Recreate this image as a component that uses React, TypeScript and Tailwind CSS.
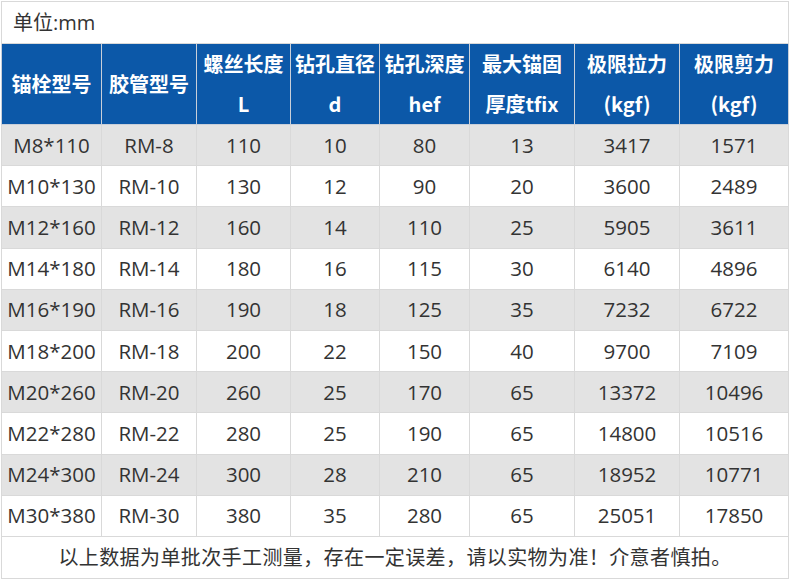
import React from "react";

const rows: string[][] = [
  ["M8*110", "RM-8", "110", "10", "80", "13", "3417", "1571"],
  ["M10*130", "RM-10", "130", "12", "90", "20", "3600", "2489"],
  ["M12*160", "RM-12", "160", "14", "110", "25", "5905", "3611"],
  ["M14*180", "RM-14", "180", "16", "115", "30", "6140", "4896"],
  ["M16*190", "RM-16", "190", "18", "125", "35", "7232", "6722"],
  ["M18*200", "RM-18", "200", "22", "150", "40", "9700", "7109"],
  ["M20*260", "RM-20", "260", "25", "170", "65", "13372", "10496"],
  ["M22*280", "RM-22", "280", "25", "190", "65", "14800", "10516"],
  ["M24*300", "RM-24", "300", "28", "210", "65", "18952", "10771"],
  ["M30*380", "RM-30", "380", "35", "280", "65", "25051", "17850"],
];

const headers: string[][] = [
  ["锚栓型号"],
  ["胶管型号"],
  ["螺丝长度", "L"],
  ["钻孔直径", "d"],
  ["钻孔深度", "hef"],
  ["最大锚固", "厚度tfix"],
  ["极限拉力", "(kgf)"],
  ["极限剪力", "(kgf)"],
];

const widths = [100, 95, 94, 89, 90, 105, 105, 109];

export default function App() {
  return (
    <div
      className="w-[790px] h-[579px] bg-white pt-px pl-px overflow-hidden"
      style={{ fontFamily: '"Open Sans", "Noto Sans CJK SC", sans-serif' }}
    >
      <table className="border-collapse table-fixed w-[788px] text-[#333]">
        <colgroup>
          {widths.map((w, i) => (
            <col key={i} style={{ width: w }} />
          ))}
        </colgroup>
        <tbody>
          <tr className="h-[42px]">
            <td
              colSpan={8}
              className="border border-[#d9d9d9] px-[11px] text-[20px] text-left align-middle"
            >
              单位:mm
            </td>
          </tr>
          <tr className="h-[80px] bg-[#0c58a8]">
            {headers.map((h, i) => (
              <td
                key={i}
                className="border border-[#c9cfd9] p-0 text-center align-middle text-white font-bold text-[20px] leading-[40px] whitespace-nowrap"
                style={{ fontFamily: '"Noto Sans CJK SC", "Open Sans", sans-serif' }}
              >
                {h.map((line, j) => (
                  <div key={j}>{line}</div>
                ))}
              </td>
            ))}
          </tr>
          {rows.map((r, i) => (
            <tr
              key={i}
              className={i % 2 === 0 ? "h-[41.2px] bg-[#e3e3e3]" : "h-[41.2px] bg-white"}
            >
              {r.map((c, j) => (
                <td
                  key={j}
                  className="border border-[#d9d9d9] p-0 text-center align-middle text-[20.5px] whitespace-nowrap"
                >
                  {c}
                </td>
              ))}
            </tr>
          ))}
          <tr className="h-[42px]">
            <td
              colSpan={8}
              className="border border-[#d9d9d9] text-center align-middle text-[20px] tracking-[0.4px] text-[#333]"
              style={{ fontFamily: '"Noto Sans CJK SC", "Open Sans", sans-serif' }}
            >
              以上数据为单批次手工测量，存在一定误差，请以实物为准！介意者慎拍。
            </td>
          </tr>
        </tbody>
      </table>
    </div>
  );
}
